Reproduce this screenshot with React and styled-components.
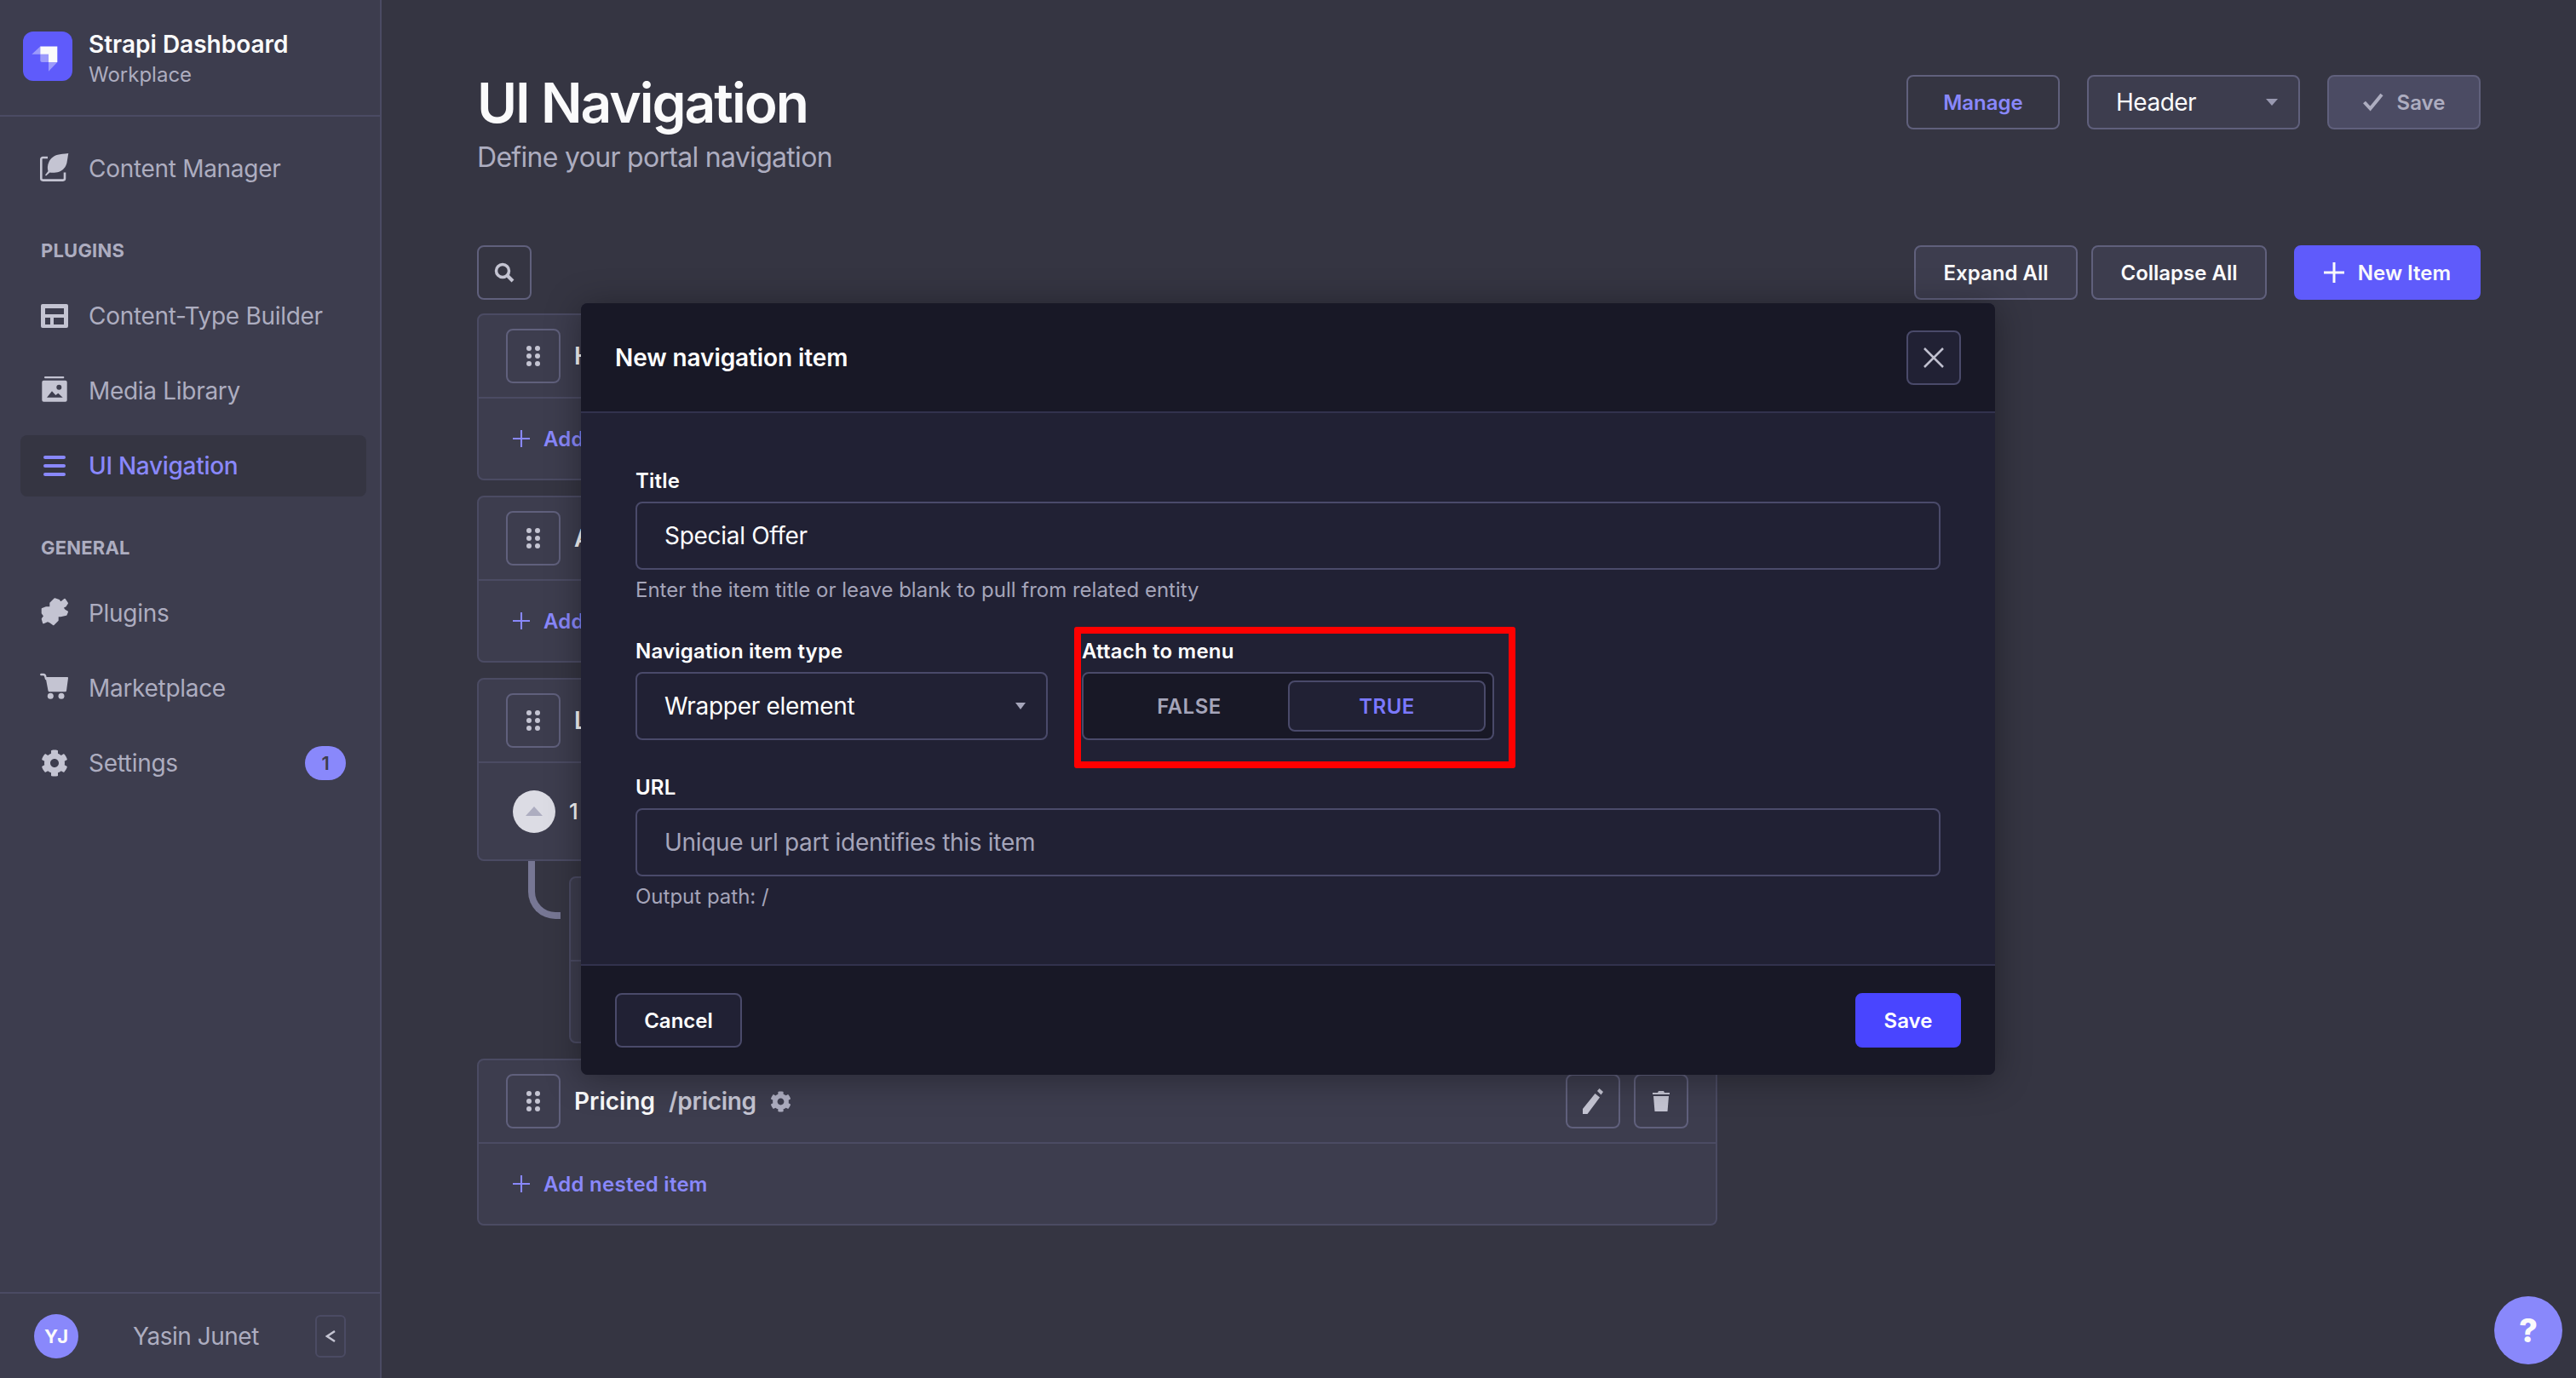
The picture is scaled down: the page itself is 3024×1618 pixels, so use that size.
import React from "react";
import styled, { createGlobalStyle } from "styled-components";
import { FaCog } from "react-icons/fa";

const Global = createGlobalStyle`
  * { box-sizing: border-box; }
  html, body { margin: 0; padding: 0; background: #181826; }
  body { font-family: Inter, "Noto Sans", sans-serif; -webkit-font-smoothing: antialiased; }
`;

const Page = styled.div`
  position: relative;
  display: flex;
  width: 3024px;
  height: 1618px;
  overflow: hidden;
  background: #181826;
  color: #fff;
`;

const Sidebar = styled.aside`
  width: 448px;
  flex: none;
  display: flex;
  flex-direction: column;
  background: #212134;
  border-right: 2px solid #32324d;
`;
const Brand = styled.div`
  height: 137px;
  flex: none;
  display: flex;
  align-items: flex-start;
  gap: 19px;
  padding: 37px 0 0 27px;
  border-bottom: 2px solid #32324d;
`;
const BrandText = styled.div`
  display: flex;
  flex-direction: column;
`;
const BrandName = styled.div`
  font-size: 28px;
  line-height: 32px;
  font-weight: 600;
  margin-top: -1px;
  color: #fff;
`;
const BrandSub = styled.div`
  font-size: 24px;
  line-height: 32px;
  margin-top: 4px;
  color: #a5a5ba;
`;
const Nav = styled.nav`
  flex: 1;
  display: flex;
  flex-direction: column;
  padding: 25px 16px 0 24px;
`;
const NavRow = styled.div`
  height: 72px;
  flex: none;
  display: flex;
  align-items: center;
  gap: 24px;
  padding: 0 24px;
  border-radius: 8px;
  margin-bottom: ${(p) => (p.$last ? 0 : 16)}px;
  font-size: 28px;
  letter-spacing: -0.3px;
  font-weight: ${(p) => (p.$active ? 500 : 400)};
  color: ${(p) => (p.$active ? "#7b79ff" : "#a5a5ba")};
  background: ${(p) => (p.$active ? "#181826" : "transparent")};
  svg { width: 32px; height: 32px; flex: none; overflow: visible; color: ${(p) => (p.$active ? "#7b79ff" : "#c0c0cf")}; }
`;
const NavLabel = styled.span`
  flex: 1;
`;
const Section = styled.div`
  height: 36px;
  margin: 42px 0 23px 24px;
  font-size: 22px;
  line-height: 36px;
  font-weight: 700;
  letter-spacing: 0.2px;
  text-transform: uppercase;
  color: #a5a5ba;
`;
const Badge = styled.span`
  width: 48px;
  height: 40px;
  border-radius: 20px;
  background: #7b79ff;
  color: #212134;
  font-size: 22px;
  font-weight: 600;
  display: flex;
  align-items: center;
  justify-content: center;
`;
const UserBar = styled.div`
  height: 101px;
  flex: none;
  display: flex;
  align-items: center;
  padding: 0 40px;
  border-top: 2px solid #32324d;
`;
const Avatar = styled.div`
  width: 52px;
  height: 52px;
  border-radius: 50%;
  background: #7b79ff;
  color: #fff;
  display: flex;
  align-items: center;
  justify-content: center;
  font-size: 22px;
  font-weight: 700;
`;
const UserName = styled.div`
  margin-left: 64px;
  flex: 1;
  font-size: 28px;
  letter-spacing: -0.5px;
  color: #a5a5ba;
`;
const CollapseBtn = styled.div`
  width: 36px;
  height: 50px;
  border: 2px solid #32324d;
  border-radius: 6px;
  display: flex;
  align-items: center;
  justify-content: center;
  svg { width: 12px; height: 18px; color: #c0c0cf; }
`;

const Main = styled.main`
  flex: 1;
  min-width: 0;
  padding: 81px 112px 0;
`;
const Head = styled.header`
  display: flex;
  justify-content: space-between;
  align-items: flex-start;
`;
const Title = styled.h1`
  margin: 0;
  font-size: 64px;
  line-height: 80px;
  font-weight: 600;
  letter-spacing: -2px;
  color: #fff;
`;
const Sub = styled.p`
  margin: 0;
  font-size: 32px;
  line-height: 48px;
  letter-spacing: -0.7px;
  color: #a5a5ba;
`;
const Actions = styled.div`
  display: flex;
  gap: 32px;
  margin-top: 7px;
`;
const Btn = styled.div`
  height: 64px;
  width: ${(p) => p.$w}px;
  margin-left: ${(p) => p.$ml || 0}px;
  display: flex;
  align-items: center;
  justify-content: center;
  gap: 16px;
  border-radius: 8px;
  border: 2px solid ${(p) => (p.$kind === "primary" ? "#4945ff" : "#4a4a6a")};
  background: ${(p) =>
    p.$kind === "primary" ? "#4945ff" : p.$kind === "disabled" ? "#32324d" : p.$kind === "ghost" ? "#181826" : "#212134"};
  color: ${(p) => (p.$kind === "ghost" ? "#7b79ff" : p.$kind === "disabled" ? "#a5a5ba" : "#fff")};
  font-size: 24px;
  font-weight: 600;
  svg { flex: none; }
`;
const HeadSelect = styled.div`
  width: 250px;
  height: 64px;
  display: flex;
  align-items: center;
  justify-content: space-between;
  padding: 0 24px 0 32px;
  border: 2px solid #4a4a6a;
  border-radius: 8px;
  background: #212134;
  font-size: 28px;
  letter-spacing: -0.5px;
  color: #fff;
`;
const Toolbar = styled.div`
  margin-top: 79px;
  display: flex;
  justify-content: space-between;
  align-items: center;
`;
const ToolGroup = styled.div`
  display: flex;
  gap: 16px;
`;
const IconBtn = styled.div`
  width: 64px;
  height: 64px;
  display: flex;
  align-items: center;
  justify-content: center;
  border: 2px solid #4a4a6a;
  border-radius: 8px;
  background: ${(p) => (p.$flat ? "#181826" : "#212134")};
  color: #c0c0cf;
  flex: none;
`;
const List = styled.div`
  margin-top: 16px;
  width: 1456px;
  display: flex;
  flex-direction: column;
  gap: 18px;
`;
const Card = styled.div`
  border: 2px solid #32324d;
  border-radius: 8px;
  background: #212134;
`;
const CardHead = styled.div`
  height: 98px;
  display: flex;
  align-items: center;
  padding: 0 32px;
  border-bottom: 2px solid #32324d;
`;
const ItemName = styled.span`
  margin-left: 16px;
  font-size: 28px;
  font-weight: 600;
`;
const ItemPath = styled.span`
  margin-left: 16px;
  font-size: 28px;
  font-weight: 600;
  letter-spacing: -0.3px;
  color: #c0c0cf;
`;
const ItemGear = styled.span`
  margin-left: 16px;
  display: flex;
  color: #a5a5ba;
  svg { width: 25px; height: 25px; }
`;
const Spacer = styled.span`
  flex: 1;
`;
const CardActions = styled.div`
  display: flex;
  gap: 16px;
`;
const CardFoot = styled.div`
  height: 94px;
  display: flex;
  align-items: center;
  gap: 16px;
  padding-left: 40px;
  color: #7b79ff;
  font-size: 24px;
  letter-spacing: 0.25px;
  font-weight: 600;
`;
const NestedRow = styled.div`
  height: 113px;
  display: flex;
  align-items: center;
  gap: 16px;
  padding-left: 40px;
  font-size: 26px;
  font-weight: 500;
`;
const Collapse = styled.div`
  width: 50px;
  height: 50px;
  border-radius: 50%;
  background: #dcdce4;
  display: flex;
  align-items: center;
  justify-content: center;
`;
const ChildWrap = styled.div`
  position: relative;
  margin-left: 108px;
  width: 1000px;
`;
const Connector = styled.div`
  position: absolute;
  left: -48px;
  top: -18px;
  width: 38px;
  height: 68px;
  border-left: 8px solid #666687;
  border-bottom: 8px solid #666687;
  border-bottom-left-radius: 32px;
`;

const HelpBtn = styled.div`
  position: absolute;
  right: 16px;
  bottom: 16px;
  width: 80px;
  height: 80px;
  border-radius: 50%;
  background: #7b79ff;
  color: #fff;
  display: flex;
  align-items: center;
  justify-content: center;
  font-size: 38px;
  font-weight: 800;
`;

const Overlay = styled.div`
  position: absolute;
  inset: 0;
  background: rgba(220, 220, 228, 0.15);
  display: flex;
  justify-content: center;
  align-items: flex-start;
  padding-top: 356px;
`;
const Modal = styled.section`
  width: 1660px;
  border-radius: 8px;
  background: #212134;
  box-shadow: 0 4px 40px rgba(3, 3, 5, 0.35);
`;
const ModalHead = styled.div`
  height: 129px;
  display: flex;
  align-items: center;
  justify-content: space-between;
  padding: 0 40px;
  background: #181826;
  border-bottom: 2px solid #32324d;
  border-radius: 8px 8px 0 0;
`;
const ModalTitle = styled.h2`
  margin: 0;
  font-size: 28px;
  font-weight: 600;
  letter-spacing: -0.1px;
  color: #fff;
`;
const ModalBody = styled.div`
  display: grid;
  grid-template-columns: repeat(12, 1fr);
  column-gap: 40px;
  row-gap: 40px;
  padding: 64px 64px 63px;
`;
const Field = styled.div`
  position: relative;
  grid-column: span ${(p) => p.$span};
  display: flex;
  flex-direction: column;
  gap: 8px;
`;
const Label = styled.label`
  font-size: 24px;
  line-height: 32px;
  font-weight: 600;
  letter-spacing: 0.2px;
  color: #fff;
`;
const Input = styled.div`
  height: 80px;
  display: flex;
  align-items: center;
  justify-content: space-between;
  padding: 0 ${(p) => (p.$select ? 24 : 32)}px 0 32px;
  border: 2px solid #4a4a6a;
  border-radius: 8px;
  background: #212134;
  font-size: 28px;
  letter-spacing: -0.3px;
  color: ${(p) => (p.$placeholder ? "#a5a5ba" : "#fff")};
`;
const Help = styled.div`
  font-size: 24px;
  line-height: 32px;
  color: #a5a5ba;
`;
const Toggle = styled.div`
  height: 80px;
  display: grid;
  grid-template-columns: 1fr 1fr;
  padding: 8px;
  border: 2px solid #4a4a6a;
  border-radius: 8px;
  background: #181826;
`;
const ToggleOpt = styled.div`
  display: flex;
  align-items: center;
  justify-content: center;
  border-radius: 8px;
  font-size: 24px;
  font-weight: 600;
  letter-spacing: 0.5px;
  color: ${(p) => (p.$on ? "#7b79ff" : "#a5a5ba")};
  background: ${(p) => (p.$on ? "#212134" : "transparent")};
  border: 2px solid ${(p) => (p.$on ? "#4a4a6a" : "transparent")};
`;
const Annotation = styled.div`
  position: absolute;
  left: -9px;
  top: -13px;
  width: 518px;
  height: 166px;
  border: 8px solid #ff0000;
  border-radius: 3px;
  pointer-events: none;
`;
const ModalFoot = styled.div`
  height: 130px;
  display: flex;
  align-items: center;
  justify-content: space-between;
  padding: 0 40px;
  background: #181826;
  border-top: 2px solid #32324d;
  border-radius: 0 0 8px 8px;
`;

const Logo = () => (
  <svg width="58" height="58" viewBox="0 0 58 58" style={{ flex: "none" }}>
    <rect width="58" height="58" rx="12" fill="#4945ff" />
    <path d="M20.3 17.6H40.3V36H30V26.8H20.3Z" fill="#fff" />
    <path d="M10.3 26.8L20.3 17.6V26.8Z" fill="#fff" opacity=".4" />
    <path d="M20.3 26.8H30V36H22.3a2 2 0 0 1-2-2Z" fill="#fff" opacity=".4" />
    <path d="M30 36H40.3L30 46.7Z" fill="#fff" opacity=".4" />
  </svg>
);
const WriteIcon = () => (
  <svg viewBox="0 0 32 32">
    <path d="M8 3H2.300a2 2 0 0 0-2 2V27.600a2 2 0 0 0 2 2H26a2 2 0 0 0 2-2V20.600" fill="none" stroke="currentColor" strokeWidth="2.600" />
    <path d="M32.300-2C27-1.500 23-1 19.700-.3 14.500 1 11.500 4 9.500 8 7.500 12 7.500 16 8.500 19L5 23.500 6 24.500 10.500 20.500C13 21 17.500 21 21.300 19.700 26 18 29.500 14 30.500 9 31.300 5 32-.5 32.300-2Z" fill="currentColor" />
  </svg>
);
const LayoutIcon = () => (
  <svg viewBox="0 0 32 32" fill="currentColor">
    <path fillRule="evenodd" d="M2 0h28a2 2 0 0 1 2 2v24a2 2 0 0 1-2 2H2a2 2 0 0 1-2-2V2a2 2 0 0 1 2-2ZM5 5v7h22V5ZM5 16v8h6V16ZM15 16v8h12V16Z" transform="translate(0 2)" />
  </svg>
);
const PictureIcon = () => (
  <svg viewBox="0 0 32 32" fill="currentColor">
    <rect x="4" y="-1" width="23.300" height="2.300" rx="1" />
    <path fillRule="evenodd" d="M3.300 3.700H28.700a2 2 0 0 1 2 2V26.700a2 2 0 0 1-2 2H3.300a2 2 0 0 1-2-2V5.700a2 2 0 0 1 2-2ZM21.300 8.700a3 3 0 1 0 0 6 3 3 0 0 0 0-6ZM7 23.700L13 16.300 17.300 21 20.300 18.700 25.700 23.700Z" />
  </svg>
);
const BarsIcon = () => (
  <svg viewBox="0 0 32 32" fill="currentColor">
    <rect x="3" y="4" width="26" height="4" rx="2" />
    <rect x="3" y="14" width="26" height="4" rx="2" />
    <rect x="3" y="24" width="26" height="4" rx="2" />
  </svg>
);
const PuzzleIcon = () => (
  <svg viewBox="0 0 32 32" fill="currentColor" stroke="currentColor" strokeWidth="2" strokeLinejoin="round">
    <path d="M11.300 4.300L16.300-.700 21.300 1 23 3.700 28-.200 31 4.300 28.700 7.700 25.300 9.300 28 12.700 31 14.300 29.700 17.700 23 19.300 19.700 19.300 19.700 24.300 14.700 29.300 11.300 26.700 8 25 3 27.300 1.700 22.700 4 19.300 1.700 16 1.700 11 6.300 9.300 11.300 9.300Z" />
  </svg>
);
const CartIcon = () => (
  <svg viewBox="0 0 32 32" fill="currentColor">
    <path d="M.3 0H3Q5 0 5.500 3L6 5" fill="none" stroke="currentColor" strokeWidth="2.400" strokeLinecap="round" />
    <path d="M5.500 3H31a1 1 0 0 1 1 1.200L30 19a1.500 1.500 0 0 1-1.500 1.300H10a1.500 1.500 0 0 1-1.500-1.300Z" />
    <circle cx="11.300" cy="25.300" r="3.500" />
    <circle cx="24" cy="25.300" r="3.500" />
  </svg>
);
const SearchIcon = () => (
  <svg width="24" height="24" viewBox="0 0 24 24" fill="none" stroke="currentColor">
    <circle cx="10" cy="10" r="7.500" strokeWidth="3.500" />
    <path d="M15.500 15.500L22 22" strokeWidth="4" />
  </svg>
);
const DragIcon = () => (
  <svg width="20" height="24" viewBox="0 0 20 24" fill="#c0c0cf">
    {[3, 12, 21].map((y) => (
      <React.Fragment key={y}>
        <circle cx="5" cy={y} r="3" />
        <circle cx="15" cy={y} r="3" />
      </React.Fragment>
    ))}
  </svg>
);
const PencilIcon = () => (
  <svg width="24" height="30" viewBox="0 0 24 30" fill="#c0c0cf">
    <path d="M0 30v-6L14.500 6l5.500 4.500L5.500 30Z" />
    <path d="M17 3l2.500-3L24 4l-2.500 3.500Z" />
  </svg>
);
const TrashIcon = () => (
  <svg width="20" height="24" viewBox="0 0 20 24" fill="#c0c0cf">
    <path d="M7 0h6l1 2h6v2H0V2h6Z" />
    <path d="M1 6h18l-1.500 18h-15Z" />
  </svg>
);
const PlusIcon = ({ size, sw }) => (
  <svg width={size} height={size} viewBox="0 0 24 24" fill="none" stroke="currentColor" strokeWidth={sw}>
    <path d="M12 0V24M0 12H24" />
  </svg>
);
const CheckIcon = () => (
  <svg width="24" height="22" viewBox="0 0 24 22" fill="none" stroke="#a5a5ba" strokeWidth="4">
    <path d="M1.500 11L8.500 18.500L22 2" />
  </svg>
);
const CrossIcon = () => (
  <svg width="24" height="24" viewBox="0 0 24 24" fill="none" stroke="#c0c0cf" strokeWidth="2.500">
    <path d="M1 1L23 23M23 1L1 23" />
  </svg>
);
const Caret = ({ color = "#8e8ea9", w = 14, h = 8, up }) => (
  <svg width={w} height={h} viewBox="0 0 14 8" fill={color} preserveAspectRatio="none">
    <path d={up ? "M0 8H14L7 0Z" : "M0 0H14L7 8Z"} />
  </svg>
);
const ChevronLeft = () => (
  <svg viewBox="0 0 12 18" fill="none" stroke="currentColor" strokeWidth="2.500">
    <path d="M11 3L2 9L11 15" />
  </svg>
);

const Item = ({ name, path, children }) => (
  <Card>
    <CardHead>
      <IconBtn>
        <DragIcon />
      </IconBtn>
      <ItemName>{name}</ItemName>
      <ItemPath>{path}</ItemPath>
      <ItemGear>
        <FaCog />
      </ItemGear>
      <Spacer />
      <CardActions>
        <IconBtn>
          <PencilIcon />
        </IconBtn>
        <IconBtn>
          <TrashIcon />
        </IconBtn>
      </CardActions>
    </CardHead>
    {children || (
      <CardFoot>
        <PlusIcon size={20} sw={2.500} />
        Add nested item
      </CardFoot>
    )}
  </Card>
);

export default function App() {
  return (
    <Page>
      <Global />
      <Sidebar>
        <Brand>
          <Logo />
          <BrandText>
            <BrandName>Strapi Dashboard</BrandName>
            <BrandSub>Workplace</BrandSub>
          </BrandText>
        </Brand>
        <Nav>
          <NavRow $last>
            <WriteIcon />
            <NavLabel>Content Manager</NavLabel>
          </NavRow>
          <Section>Plugins</Section>
          <NavRow>
            <LayoutIcon />
            <NavLabel>Content-Type Builder</NavLabel>
          </NavRow>
          <NavRow>
            <PictureIcon />
            <NavLabel>Media Library</NavLabel>
          </NavRow>
          <NavRow $active $last>
            <BarsIcon />
            <NavLabel>UI Navigation</NavLabel>
          </NavRow>
          <Section>General</Section>
          <NavRow>
            <PuzzleIcon />
            <NavLabel>Plugins</NavLabel>
          </NavRow>
          <NavRow>
            <CartIcon />
            <NavLabel>Marketplace</NavLabel>
          </NavRow>
          <NavRow $last>
            <FaCog />
            <NavLabel>Settings</NavLabel>
            <Badge>1</Badge>
          </NavRow>
        </Nav>
        <UserBar>
          <Avatar>YJ</Avatar>
          <UserName>Yasin Junet</UserName>
          <CollapseBtn>
            <ChevronLeft />
          </CollapseBtn>
        </UserBar>
      </Sidebar>
      <Main>
        <Head>
          <div>
            <Title>UI Navigation</Title>
            <Sub>Define your portal navigation</Sub>
          </div>
          <Actions>
            <Btn $kind="ghost" $w={180}>Manage</Btn>
            <HeadSelect>
              Header
              <Caret />
            </HeadSelect>
            <Btn $kind="disabled" $w={180}>
              <CheckIcon />
              Save
            </Btn>
          </Actions>
        </Head>
        <Toolbar>
          <IconBtn $flat>
            <SearchIcon />
          </IconBtn>
          <ToolGroup>
            <Btn $w={192}>Expand All</Btn>
            <Btn $w={206}>Collapse All</Btn>
            <Btn $kind="primary" $w={219} $ml={16}>
              <PlusIcon size={24} sw={3} />
              New Item
            </Btn>
          </ToolGroup>
        </Toolbar>
        <List>
          <Item name="Home" path="/home" />
          <Item name="About" path="/about" />
          <Item name="Landing" path="/landing">
            <NestedRow>
              <Collapse>
                <Caret color="#a5a5ba" w={20} h={11} up />
              </Collapse>
              1 nested item
            </NestedRow>
          </Item>
          <ChildWrap>
            <Connector />
            <Item name="Offers" path="/offers" />
          </ChildWrap>
          <Item name="Pricing" path="/pricing" />
        </List>
      </Main>
      <HelpBtn>?</HelpBtn>
      <Overlay>
        <Modal>
          <ModalHead>
            <ModalTitle>New navigation item</ModalTitle>
            <IconBtn>
              <CrossIcon />
            </IconBtn>
          </ModalHead>
          <ModalBody>
            <Field $span={12}>
              <Label>Title</Label>
              <Input>Special Offer</Input>
              <Help>Enter the item title or leave blank to pull from related entity</Help>
            </Field>
            <Field $span={4}>
              <Label>Navigation item type</Label>
              <Input $select>
                Wrapper element
                <Caret color="#a5a5ba" w={12} h={8} />
              </Input>
            </Field>
            <Field $span={4}>
              <Label>Attach to menu</Label>
              <Toggle>
                <ToggleOpt>FALSE</ToggleOpt>
                <ToggleOpt $on>TRUE</ToggleOpt>
              </Toggle>
              <Annotation />
            </Field>
            <Field $span={12}>
              <Label>URL</Label>
              <Input $placeholder>Unique url part identifies this item</Input>
              <Help>Output path: /</Help>
            </Field>
          </ModalBody>
          <ModalFoot>
            <Btn $w={149}>Cancel</Btn>
            <Btn $kind="primary" $w={124}>Save</Btn>
          </ModalFoot>
        </Modal>
      </Overlay>
    </Page>
  );
}
